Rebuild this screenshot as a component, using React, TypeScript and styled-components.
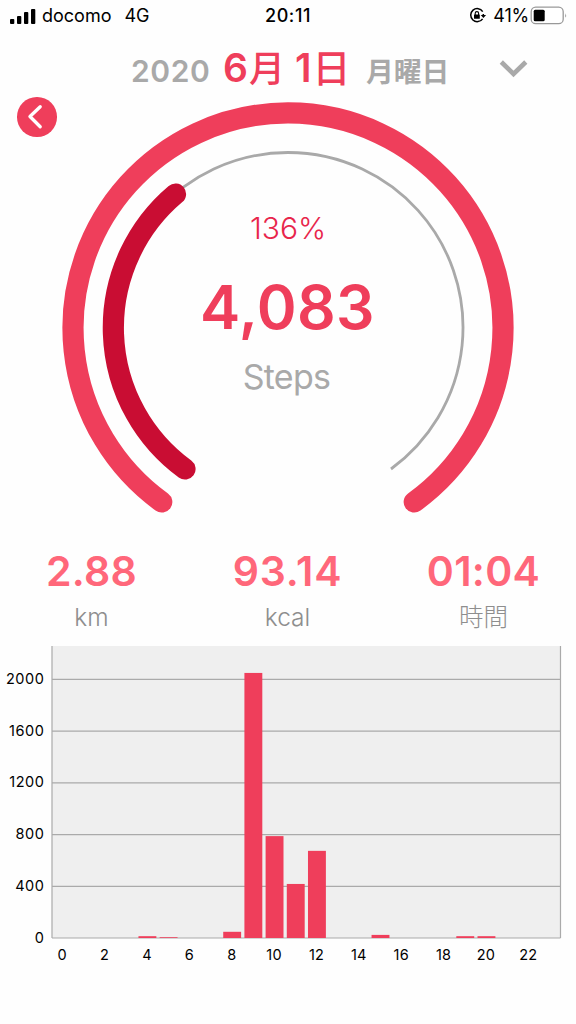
import React from "react";
import styled, { createGlobalStyle } from "styled-components";

const RED = "#ef3e5b";
const GREY = "#a9a9a9";

const GlobalStyle = createGlobalStyle`
  body { margin: 0; background: #fefefe; }
  * { box-sizing: border-box; }
`;

const Screen = styled.main`
  width: 576px;
  height: 1024px;
  overflow: hidden;
  display: flex;
  flex-direction: column;
  background: #fefefe;
  font-family: Inter, "Noto Sans CJK JP", sans-serif;
`;

const StatusBar = styled.header`
  height: 32px;
  flex: none;
  display: grid;
  grid-template-columns: 1fr auto 1fr;
  align-items: center;
  padding: 0 9px 0 10px;
  font-size: 18px;
  line-height: 32px;
  color: #000;
`;

const StatusGroup = styled.div<{ $end?: boolean }>`
  display: flex;
  align-items: center;
  justify-content: ${(p) => (p.$end ? "flex-end" : "flex-start")};
`;

const StatusText = styled.span<{ $left?: number; $spacing?: number }>`
  margin-left: ${(p) => p.$left ?? 0}px;
  letter-spacing: ${(p) => p.$spacing ?? 0}px;
  white-space: nowrap;
`;

const Clock = styled.time`
  font-weight: 550;
  letter-spacing: 0.6px;
  margin-right: 1px;
`;

const DateBar = styled.div`
  height: 64px;
  flex: none;
  display: flex;
  align-items: baseline;
  padding: 1.5px 47px 0 131px;
  line-height: 64px;
  white-space: nowrap;
  font-weight: 600;
`;

const Year = styled.span`
  width: 92px;
  font-size: 30px;
  letter-spacing: 0.6px;
  color: ${GREY};
`;

const Day = styled.span`
  width: 143px;
  font-size: 39px;
  color: ${RED};
`;

const Kanji = styled.span<{ $size: number; $left?: number; $right?: number }>`
  font-family: "Noto Sans CJK JP", sans-serif;
  font-size: ${(p) => p.$size}px;
  font-weight: 500;
  margin-left: ${(p) => p.$left ?? 0}px;
  margin-right: ${(p) => p.$right ?? 0}px;
`;

const Weekday = styled.span`
  width: 133px;
  font-family: "Noto Sans CJK JP", sans-serif;
  font-size: 27.8px;
  font-weight: 700;
  color: ${GREY};
`;

const Toggle = styled.button`
  border: 0;
  padding: 0;
  background: none;
  align-self: flex-start;
  line-height: 0;
  margin-top: 24px;
`;

const Dial = styled.section`
  position: relative;
  height: 424px;
  flex: none;
`;

const DialArcs = styled.svg`
  display: block;
`;

const BackButton = styled.button`
  position: absolute;
  left: 17px;
  top: 1px;
  width: 39.5px;
  height: 39.5px;
  padding: 0;
  border: 0;
  border-radius: 50%;
  background: ${RED};
`;

const DialText = styled.div`
  position: absolute;
  inset: 112px 0 auto 0;
  display: flex;
  flex-direction: column;
  align-items: center;
`;

const Percent = styled.div`
  height: 40px;
  line-height: 40px;
  font-size: 30px;
  font-weight: 300;
  color: #e8254b;
`;

const Steps = styled.div`
  height: 120px;
  line-height: 118px;
  font-size: 60.5px;
  font-weight: 570;
  letter-spacing: 0.4px;
  margin-left: -1px;
  color: ${RED};
`;

const StepsLabel = styled.div`
  height: 40px;
  line-height: 40px;
  font-size: 34px;
  letter-spacing: -0.7px;
  margin-top: -11px;
  margin-left: -3px;
  color: ${GREY};
`;

const Stats = styled.section`
  width: 588px;
  margin-left: -6.5px;
  height: 126px;
  padding-top: 26px;
  flex: none;
  display: grid;
  grid-template-columns: repeat(3, 1fr);
  text-align: center;
`;

const StatValue = styled.div<{ $spacing: number }>`
  height: 50px;
  line-height: 50px;
  font-size: 41px;
  font-weight: 570;
  letter-spacing: ${(p) => p.$spacing}px;
  color: #ff677a;
`;

const StatLabel = styled.div`
  height: 40px;
  line-height: 42px;
  font-size: 24.5px;
  font-weight: 300;
  color: #8e8e8e;
`;

const Chart = styled.svg`
  display: block;
  flex: none;
  font-size: 14.5px;
`;

const hours = [0, 0, 0, 0, 14, 6, 0, 0, 48, 2050, 788, 418, 674, 0, 0, 24, 0, 0, 0, 14, 14, 0, 0, 0];
const ticks = [0, 400, 800, 1200, 1600, 2000];
const SLOT = 21.19;
const BASE = 292;
const yOf = (v: number) => BASE - v * 0.1293;

const stats = [
  { value: "2.88", label: "km", spacing: 0.2 },
  { value: "93.14", label: "kcal", spacing: 0.8 },
  { value: "01:04", label: "時間", spacing: 0.3 },
];

export default function App() {
  return (
    <Screen>
      <GlobalStyle />
      <StatusBar>
        <StatusGroup>
          <svg width="26" height="18" viewBox="0 0 26 18">
            <rect x="0" y="12" width="4.3" height="5" rx="1" />
            <rect x="7" y="9" width="4.3" height="8" rx="1" />
            <rect x="14" y="5" width="4.3" height="12" rx="1" />
            <rect x="21" y="2" width="4.3" height="15" rx="1" />
          </svg>
          <StatusText $left={6}>docomo</StatusText>
          <StatusText $left={13}>4G</StatusText>
        </StatusGroup>
        <Clock>20:11</Clock>
        <StatusGroup $end>
          <svg width="18" height="18" viewBox="0 0 18 18" fill="none" stroke="#000">
            <path d="M13.6 11.8A6.5 6.5 0 1 1 13.7 4.6" strokeWidth="1.5" />
            <path d="M14.3 7v2.2" strokeWidth="1.5" />
            <path d="M11.7 8h5.4l-2.7 3z" fill="#000" stroke="none" />
            <rect x="5" y="7.5" width="5.8" height="4.3" rx=".5" fill="#000" stroke="none" />
            <path d="M6.2 8V6.3a1.7 1.7 0 0 1 3.4 0V8" strokeWidth="1.1" />
          </svg>
          <StatusText $left={6} $spacing={-0.2}>41%</StatusText>
          <svg width="38" height="20" viewBox="0 0 38 20">
            <rect x="2.2" y="1.2" width="32" height="16.5" rx="4.5" fill="#fff" stroke="#999" strokeWidth="1.3" />
            <rect x="4.7" y="3.7" width="11" height="11.5" rx="1.5" />
            <path d="M36.3 7.2q1.6 2.3 0 4.6z" fill="#888" />
          </svg>
        </StatusGroup>
      </StatusBar>

      <DateBar>
        <Year>2020</Year>
        <Day>
          6<Kanji $size={36} $left={1} $right={10}>月</Kanji>1<Kanji $size={38} $left={1}>日</Kanji>
        </Day>
        <Weekday>月曜日</Weekday>
        <Toggle aria-label="Expand">
          <svg width="30" height="22" viewBox="0 0 30 22" fill="none" stroke={GREY} strokeWidth="4.6">
            <path d="M2.3 4l12.2 12L26.8 4" />
          </svg>
        </Toggle>
      </DateBar>

      <Dial>
        <DialArcs width="576" height="424" viewBox="0 96 576 424" fill="none">
          <path d="M161.75 502A215 215 0 1 1 414.25 502" stroke={RED} strokeWidth="21.2" strokeLinecap="round" />
          <path d="M185 469A175 175 0 1 1 391 469" stroke={GREY} strokeWidth="2.8" />
          <path d="M185 469A175 175 0 0 1 175.5 194" stroke="#c90d33" strokeWidth="21.2" strokeLinecap="round" />
        </DialArcs>
        <BackButton aria-label="Back">
          <svg width="39" height="39" viewBox="0 0 40 40" fill="none" stroke="#fff" strokeWidth="3.4" strokeLinecap="round" strokeLinejoin="round">
            <path d="M23.8 10L13.3 20l10.5 10.5" />
          </svg>
        </BackButton>
        <DialText>
          <Percent>136%</Percent>
          <Steps>4,083</Steps>
          <StepsLabel>Steps</StepsLabel>
        </DialText>
      </Dial>

      <Stats>
        {stats.map((s) => (
          <div key={s.label}>
            <StatValue $spacing={s.spacing}>{s.value}</StatValue>
            <StatLabel>{s.label}</StatLabel>
          </div>
        ))}
      </Stats>

      <Chart width="576" height="330" viewBox="0 0 576 330">
        <rect x="52" y="0" width="508.5" height={BASE} fill="#efefef" />
        {ticks.map((t) => (
          <g key={t}>
            <path d={`M52 ${yOf(t)}H560.5`} stroke="#aaa" strokeWidth="1.2" />
            <text x="44.3" y={yOf(t) + 4.5} textAnchor="end" letterSpacing="0.5">{t}</text>
          </g>
        ))}
        <path d={`M52 0V${BASE}M560.5 0V${BASE}`} stroke="#aaa" strokeWidth="1.2" />
        {hours.map((v, h) =>
          v ? <rect key={h} x={53.7 + h * SLOT} y={yOf(v)} width="17.9" height={v * 0.1293} fill={RED} /> : null
        )}
        {hours.map((_, h) =>
          h % 2 === 0 ? (
            <text key={h} x={62.2 + h * SLOT} y="313.5" textAnchor="middle" letterSpacing="0.2">{h}</text>
          ) : null
        )}
      </Chart>
    </Screen>
  );
}
